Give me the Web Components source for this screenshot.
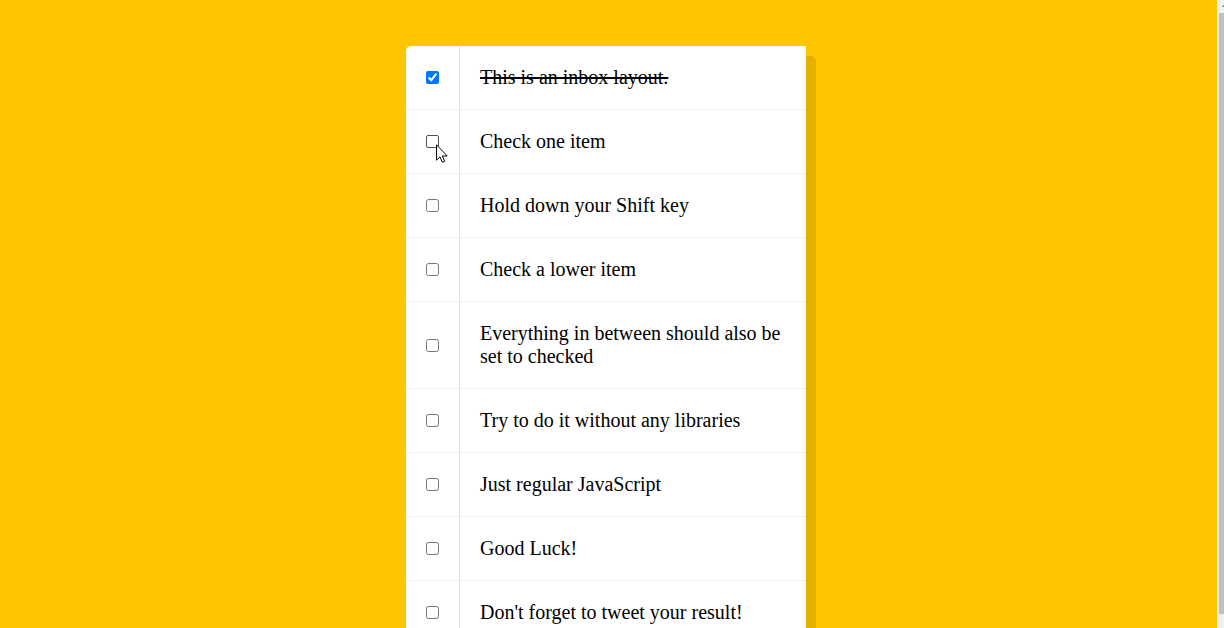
<!DOCTYPE html>
<html lang="en">
<head>
<meta charset="utf-8">
<title>Hold Shift to Check Multiple Checkboxes</title>
<style>
html, body { margin: 0; height: 100%; }
body { background: #ffc600; overflow: hidden; font-family: "Liberation Serif", "Times New Roman", serif; font-size: 20px; line-height: 23px; color: #000; }
</style>
</head>
<body>
<inbox-page>
  <inbox-list>
    <inbox-item checked>This is an inbox layout.</inbox-item>
    <inbox-item pointed>Check one item</inbox-item>
    <inbox-item>Hold down your Shift key</inbox-item>
    <inbox-item>Check a lower item</inbox-item>
    <inbox-item>Everything in between should also be set to checked</inbox-item>
    <inbox-item>Try to do it without any libraries</inbox-item>
    <inbox-item>Just regular JavaScript</inbox-item>
    <inbox-item>Good Luck!</inbox-item>
    <inbox-item>Don't forget to tweet your result!</inbox-item>
  </inbox-list>
</inbox-page>
<script>
class InboxPage extends HTMLElement {
  constructor() {
    super();
    this.attachShadow({ mode: 'open' }).innerHTML = `
      <style>
        :host { display: flex; height: 100vh; overflow: hidden; }
        main { flex: 1; min-width: 0; padding: 46px 5px 50px 0; }
        page-scrollbar { flex: none; }
      </style>
      <main><slot></slot></main>
      <page-scrollbar></page-scrollbar>`;
  }
}

class PageScrollbar extends HTMLElement {
  constructor() {
    super();
    this.attachShadow({ mode: 'open' }).innerHTML = `
      <style>
        :host { display: flex; flex-direction: column; box-sizing: border-box; width: 7px; padding-left: 2px; background: #f1f1f1; }
        svg { display: block; flex: none; }
        .thumb { flex: 1; margin-bottom: 14px; background: #c1c1c1; }
      </style>
      <svg width="5" height="13" aria-hidden="true"><path d="M3 7V6h1V5h1v2z" fill="#8b8b8b"/></svg>
      <div class="thumb"></div>`;
  }
}

class InboxList extends HTMLElement {
  constructor() {
    super();
    this.attachShadow({ mode: 'open' }).innerHTML = `
      <style>
        :host { display: block; max-width: 400px; margin: 0 auto; background: #fff; border-radius: 5px 0 0 5px; }
        .list { border-radius: 5px; box-shadow: 10px 10px 0 rgba(0, 0, 0, 0.1); }
      </style>
      <div class="list"><slot></slot></div>`;
    this.last = null;
    this.addEventListener('click', (e) => {
      const item = e.target.closest('inbox-item');
      if (!item || e.composedPath()[0].type !== 'checkbox') return;
      if (e.shiftKey && item.box.checked && this.last) {
        const items = [...this.children];
        const [a, b] = [items.indexOf(item), items.indexOf(this.last)].sort((x, y) => x - y);
        items.slice(a, b + 1).forEach((i) => { i.box.checked = true; });
      }
      this.last = item;
    });
  }
}

class InboxItem extends HTMLElement {
  constructor() {
    super();
    this.attachShadow({ mode: 'open' }).innerHTML = `
      <style>
        :host { display: flex; align-items: center; position: relative; border-bottom: 1px solid #f1f1f1; }
        :host(:last-child) { border-bottom: 0; }
        input { flex: none; width: 13px; height: 13px; margin: 20px; }
        :host([pointed]) input:not(:checked) { appearance: none; box-sizing: border-box; border: 1px solid #4f4f4f; border-radius: 2px; background: #fff; }
        label { flex: 1; padding: 20px; border-left: 1px solid #d1e2ff; }
        input:checked + label { text-decoration: line-through; text-decoration-thickness: 2px; }
        svg { display: none; position: absolute; left: 30px; top: 34px; }
        :host([pointed]) svg { display: block; }
      </style>
      <input type="checkbox" id="box">
      <label for="box"><slot></slot></label>
      <svg width="12" height="19" viewBox="0 0 12 19" aria-hidden="true">
        <path d="M.5 .8V16.2L4 12.9L6.3 18.3L8.7 17.3L6.4 12H11.2Z" fill="#fff" stroke="#000"/>
      </svg>`;
    this.box = this.shadowRoot.querySelector('input');
  }
  connectedCallback() { this.box.checked = this.hasAttribute('checked'); }
}

customElements.define('page-scrollbar', PageScrollbar);
customElements.define('inbox-page', InboxPage);
customElements.define('inbox-list', InboxList);
customElements.define('inbox-item', InboxItem);
</script>
</body>
</html>
